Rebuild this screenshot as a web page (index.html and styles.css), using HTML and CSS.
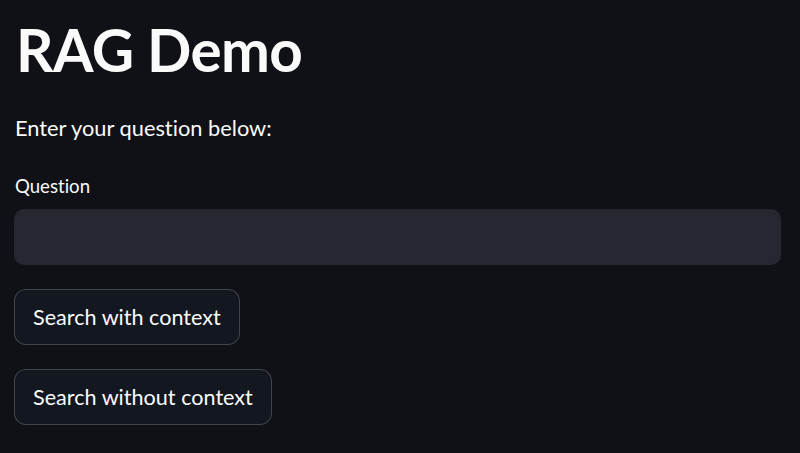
FILE: index.html
```html
<!DOCTYPE html>
<html lang="en">
<head>
<meta charset="utf-8">
<title>RAG Demo</title>
<link rel="stylesheet" href="styles.css">
</head>
<body>
<main class="app">
  <h1 class="title">RAG Demo</h1>
  <p class="intro">Enter your question below:</p>
  <div class="field">
    <label class="label" for="q">Question</label>
    <input class="input" id="q" type="text">
  </div>
  <div class="actions">
    <button class="btn" type="button">Search with context</button>
    <button class="btn" type="button">Search without context</button>
  </div>
</main>
</body>
</html>
```

FILE: styles.css
```css
html, body {
  margin: 0;
  padding: 0;
  background: #0f1117;
  color: #fafafa;
  font-family: Lato, "Open Sans", sans-serif;
  font-variant-ligatures: none;
}
.app {
  padding: 14px 19px 0 14px;
  display: flex;
  flex-direction: column;
}
.title {
  margin: 0;
  padding-left: 2px;
  font-size: 58.4px;
  font-weight: 700;
  line-height: 100px;
  height: 100px;
  margin-top: -15px;
  letter-spacing: -0.6px;
}
.intro {
  margin: 0;
  font-size: 21.8px;
  line-height: 32px;
  margin-top: 13px;
  padding-left: 1px;
}
.field {
  display: flex;
  flex-direction: column;
  margin-top: 28px;
}
.label {
  font-size: 18.6px;
  line-height: 28px;
  height: 37px;
  padding-left: 1px;
}
.input {
  height: 56px;
  box-sizing: border-box;
  border: none;
  border-radius: 10px;
  background: #262730;
  outline: none;
}
.actions {
  display: flex;
  flex-direction: column;
  align-items: flex-start;
  gap: 24px;
  margin-top: 24px;
}
.btn {
  height: 56px;
  box-sizing: border-box;
  padding: 0 18px;
  border: 1px solid rgba(250, 250, 250, 0.2);
  border-radius: 12px;
  background: #131720;
  color: #fafafa;
  font-family: inherit;
  font-variant-ligatures: none;
  font-size: 21.6px;
}
```
